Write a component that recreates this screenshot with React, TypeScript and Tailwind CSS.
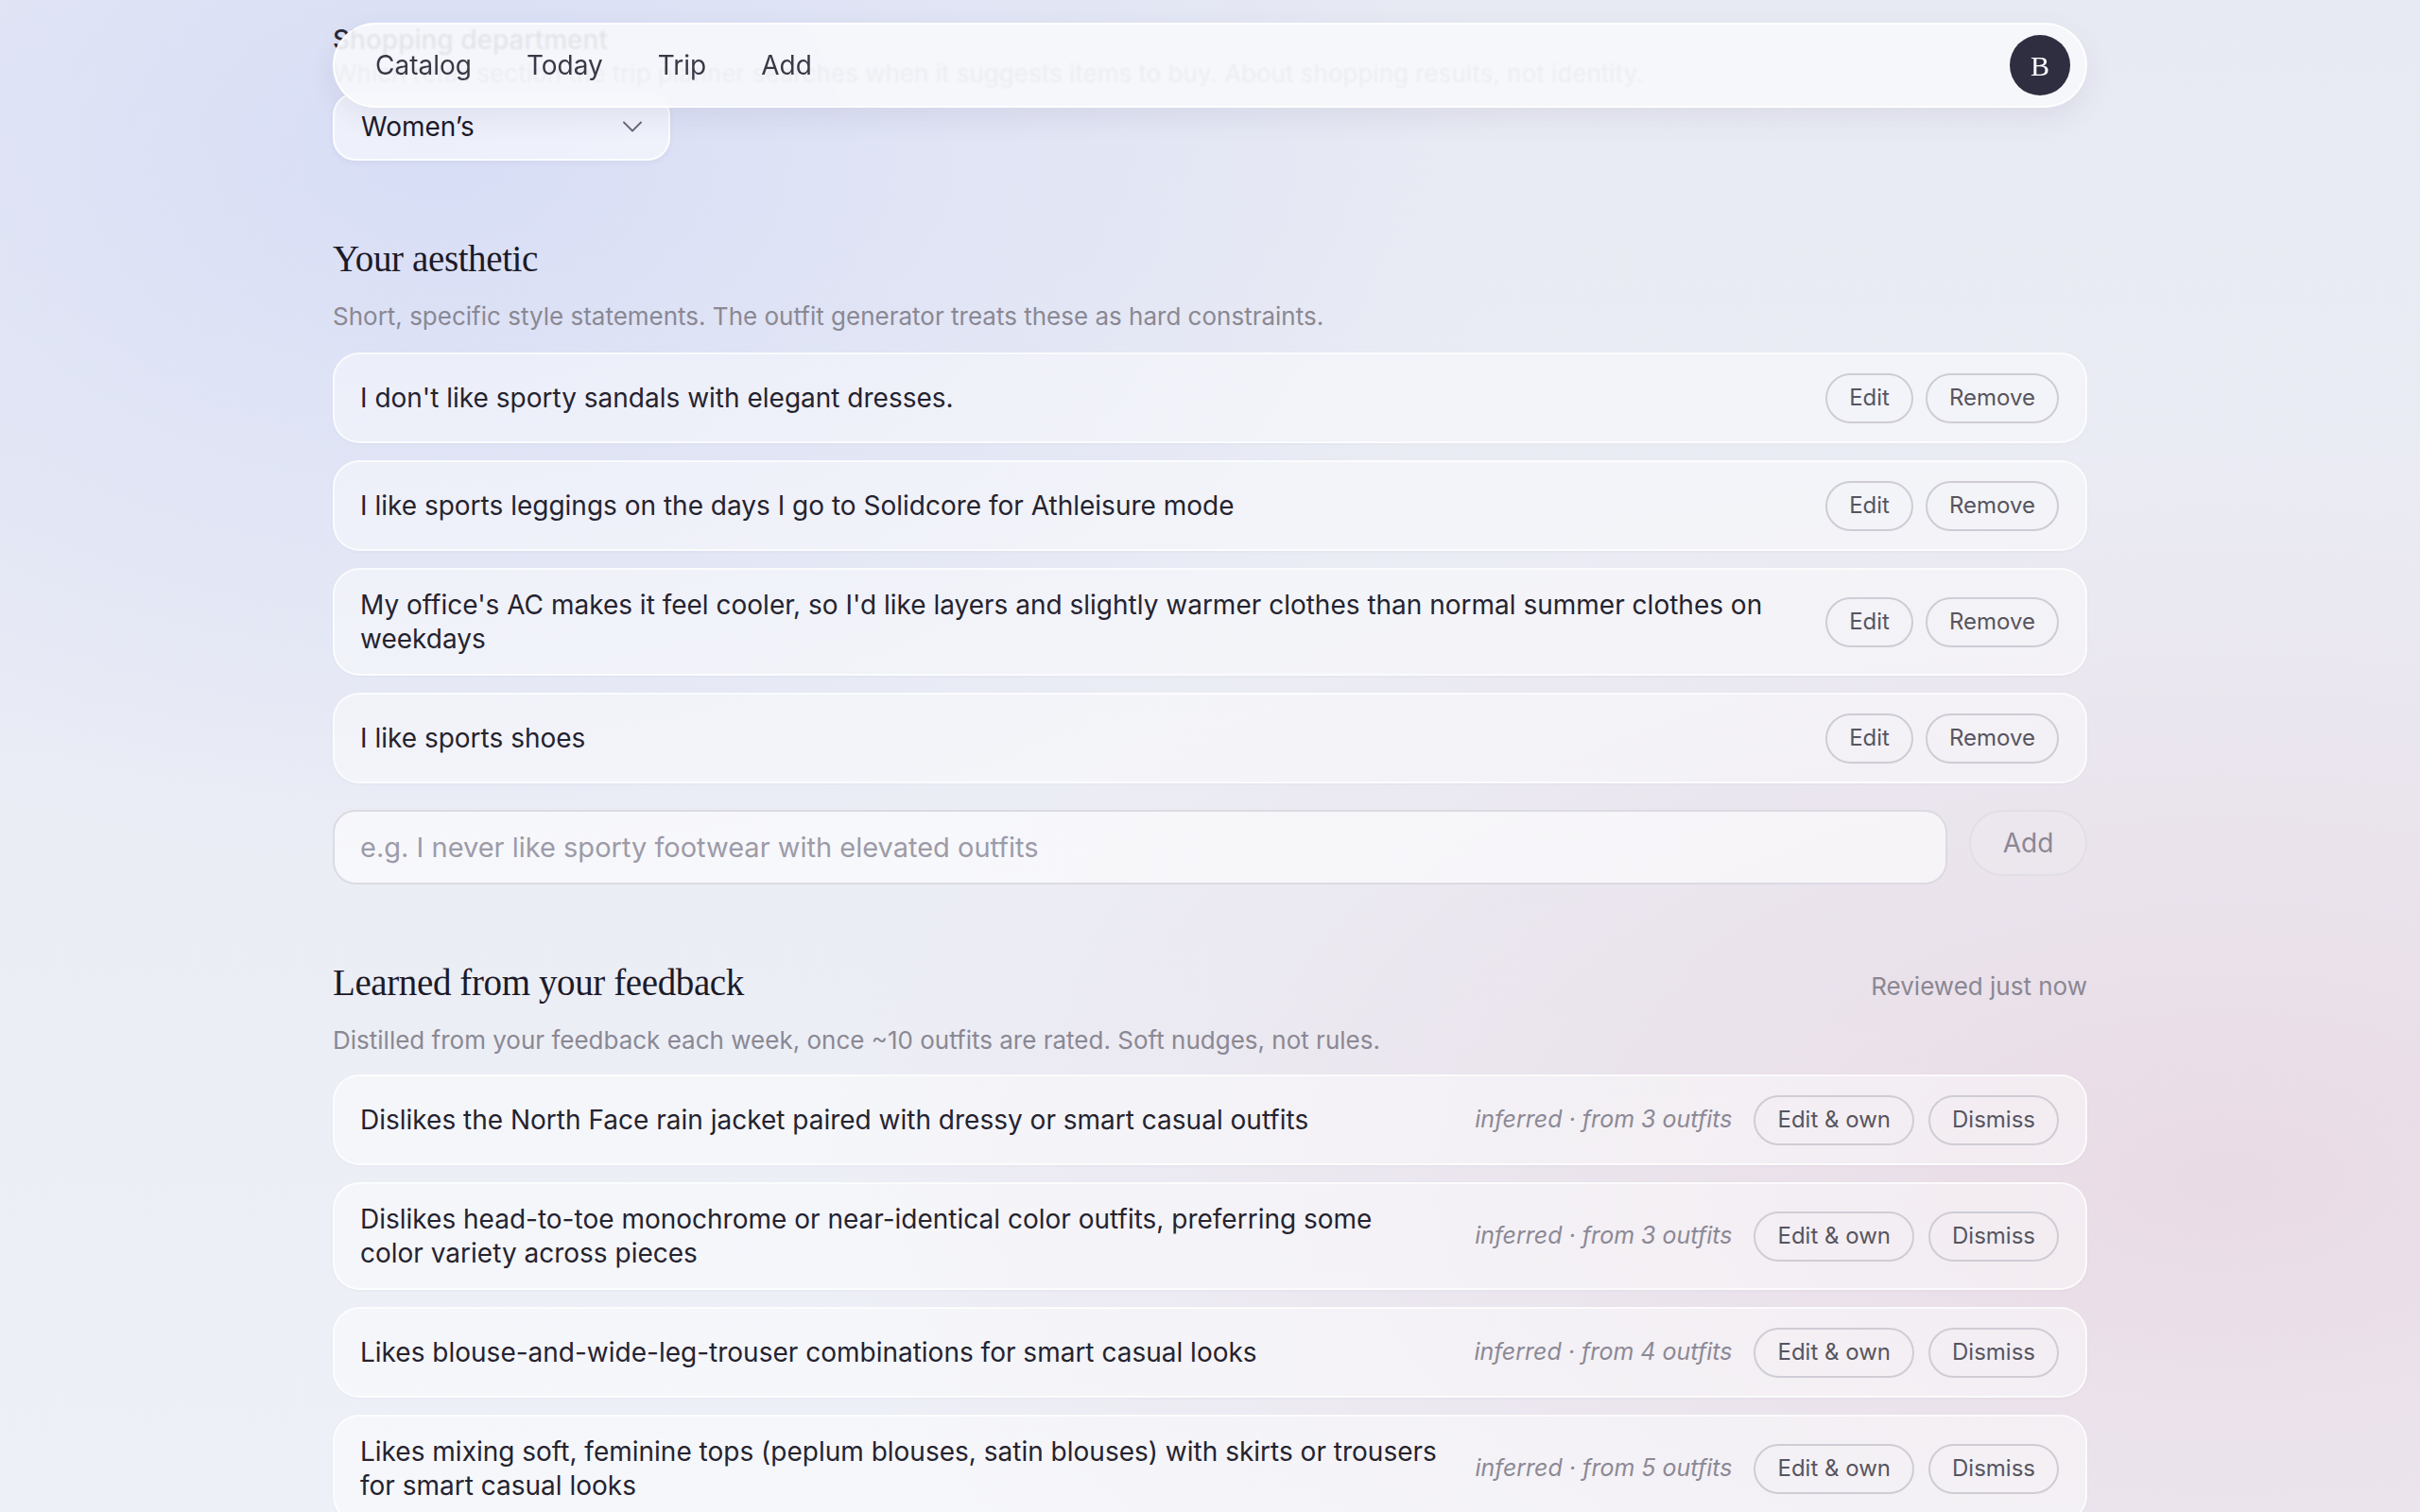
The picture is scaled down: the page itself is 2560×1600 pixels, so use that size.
import { ChevronDown } from "lucide-react";

const aesthetics = [
  "I don't like sporty sandals with elegant dresses.",
  "I like sports leggings on the days I go to Solidcore for Athleisure mode",
  "My office's AC makes it feel cooler, so I'd like layers and slightly warmer clothes than normal summer clothes on weekdays",
  "I like sports shoes",
];

const learned = [
  { text: "Dislikes the North Face rain jacket paired with dressy or smart casual outfits", count: 3 },
  {
    text: "Dislikes head-to-toe monochrome or near-identical color outfits, preferring some color variety across pieces",
    count: 3,
  },
  { text: "Likes blouse-and-wide-leg-trouser combinations for smart casual looks", count: 4 },
  {
    text: "Likes mixing soft, feminine tops (peplum blouses, satin blouses) with skirts or trousers for smart casual looks",
    count: 5,
  },
];

function PillButton({ label }: { label: string }) {
  return (
    <button className="h-[53px] shrink-0 rounded-full border-2 border-[#cfccd5] px-[23px] text-[24px] text-[#57555f]">
      {label}
    </button>
  );
}

function Row({ text, narrow, children }: { text: string; narrow?: boolean; children: React.ReactNode }) {
  return (
    <div className="flex min-h-[96px] items-center gap-6 rounded-[28px] border-2 border-white/70 bg-white/45 py-[19px] pl-[27px] pr-[28px] shadow-[0_1px_3px_rgba(60,50,100,0.04)]">
      <p className={narrow ? "max-w-[1141px] flex-1 text-[28px] leading-[36px] text-[#25232f]" : "flex-1 text-[28px] leading-[36px] text-[#25232f]"}>
        {text}
      </p>
      <div className="ml-auto flex shrink-0 items-center">{children}</div>
    </div>
  );
}

function SectionTitle({ title, sub, aside }: { title: string; sub: string; aside?: string }) {
  return (
    <div>
      <div className="flex items-baseline justify-between">
        <h2 className="font-['Liberation_Serif',serif] text-[39px] leading-[48px] tracking-[-0.01em] text-[#1c1a28]">
          {title}
        </h2>
        {aside && <span className="text-[26px] text-[#8a8792]">{aside}</span>}
      </div>
      <p className="mt-[20px] text-[26px] leading-[34px] text-[#8a8893]">{sub}</p>
    </div>
  );
}

export default function App() {
  return (
    <div className="relative h-screen overflow-hidden bg-[radial-gradient(ellipse_at_18%_10%,#d8def6_0%,rgba(216,222,246,0)_38%),radial-gradient(ellipse_at_92%_78%,#e9dbe5_0%,rgba(233,219,229,0)_45%),linear-gradient(180deg,#e8eaf3_0%,#eef0f7_100%)] font-['Inter',sans-serif]">
      <div className="mx-auto w-[1856px] pt-[24px]">
        <section>
          <h3 className="text-[28px] font-medium leading-[36px] text-[#2a2836]">Shopping department</h3>
          <p className="mt-[2px] text-[26px] leading-[32px] text-[#8a8893]">
            Which retail section the trip planner searches when it suggests items to buy. About shopping results, not identity.
          </p>
          <div className="mt-[4px] flex h-[72px] w-[357px] items-center justify-between rounded-[24px] border-2 border-white/80 bg-white/55 pl-[28px] pr-[20px] shadow-[0_2px_6px_rgba(60,50,100,0.06)]">
            <span className="text-[28px] text-[#1d1b2a]">Women’s</span>
            <ChevronDown className="h-[36px] w-[36px] text-[#6b6978]" strokeWidth={1.3} />
          </div>
        </section>

        <section className="mt-[80px]">
          <SectionTitle
            title="Your aesthetic"
            sub="Short, specific style statements. The outfit generator treats these as hard constraints."
          />
          <div className="mt-[21px] flex flex-col gap-[18px]">
            {aesthetics.map((a) => (
              <Row key={a} text={a}>
                <div className="flex items-center gap-[13px]">
                  <PillButton label="Edit" />
                  <PillButton label="Remove" />
                </div>
              </Row>
            ))}
          </div>
          <div className="mt-[28px] flex items-start gap-[23px]">
            <input
              className="h-[79px] flex-1 rounded-[24px] border-2 border-[#dcdae2] bg-white/60 px-[27px] text-[29px] text-[#25232f] outline-none placeholder:text-[#9d9ba8]"
              placeholder="e.g. I never like sporty footwear with elevated outfits"
            />
            <button className="h-[70px] w-[125px] rounded-full border-2 border-[#e2dee6] bg-[#ede7ee]/70 text-[28px] text-[#8b8794]">
              Add
            </button>
          </div>
        </section>

        <section className="mt-[80px]">
          <SectionTitle
            title="Learned from your feedback"
            sub="Distilled from your feedback each week, once ~10 outfits are rated. Soft nudges, not rules."
            aside="Reviewed just now"
          />
          <div className="mt-[19px] flex flex-col gap-[18px]">
            {learned.map((l) => (
              <Row key={l.text} text={l.text} narrow>
                <span className="mr-[23px] text-[25px] italic text-[#8c8995]">inferred · from {l.count} outfits</span>
                <div className="flex items-center gap-[15px]">
                  <PillButton label="Edit & own" />
                  <PillButton label="Dismiss" />
                </div>
              </Row>
            ))}
          </div>
        </section>
      </div>

      <nav className="absolute left-1/2 top-[24px] flex h-[90px] w-[1856px] -translate-x-1/2 items-center justify-between rounded-full border-2 border-white/80 bg-[#f7f8fc]/90 pl-[43px] pr-[16px] shadow-[0_10px_30px_rgba(50,40,90,0.08)] backdrop-blur-[1px]">
        <div className="flex items-center gap-[58px] text-[28px] text-[#3a3846]">
          <span>Catalog</span>
          <span>Today</span>
          <span>Trip</span>
          <span>Add</span>
        </div>
        <div className="flex h-[64px] w-[64px] items-center justify-center rounded-full bg-[#2f2e41] font-['Liberation_Serif',serif] text-[30px] text-white">
          B
        </div>
      </nav>
    </div>
  );
}
